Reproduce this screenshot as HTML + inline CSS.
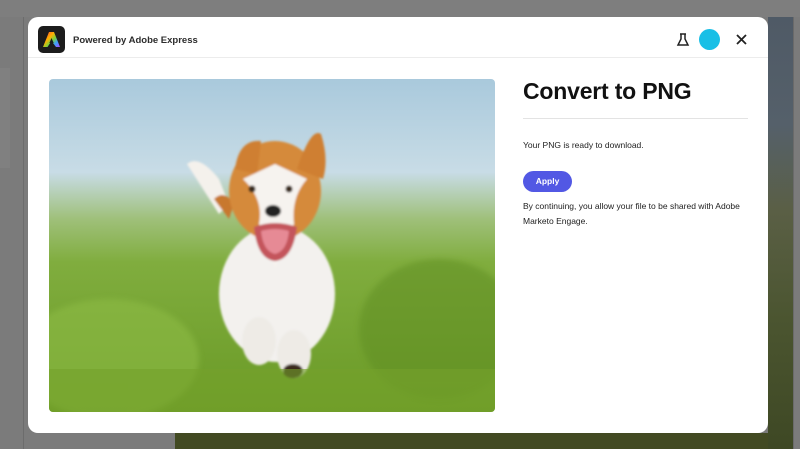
<!DOCTYPE html>
<html><head><meta charset="utf-8"><style>
*{margin:0;padding:0;box-sizing:border-box}
body{width:800px;height:449px;overflow:hidden;background:#7b7b7b;position:relative;font-family:"Liberation Sans",sans-serif}
.abs{position:absolute}
</style></head><body>
<div class="abs" style="left:0;top:0;width:800px;height:17px;background:#7e7e7e"></div>
<div class="abs" style="left:23px;top:17px;width:1px;height:432px;background:#6c6c6c"></div>
<div class="abs" style="left:0;top:68px;width:10px;height:100px;background:#808080"></div>
<div class="abs" style="left:768px;top:17px;width:25px;height:432px;background:linear-gradient(#4f5a66 0%,#55606a 25%,#5a5f45 45%,#4b5530 70%,#3e4824 100%)"></div>
<div class="abs" style="left:793px;top:17px;width:1px;height:432px;background:#6a6a6a"></div>
<div class="abs" style="left:175px;top:433px;width:593px;height:16px;background:#424a22"></div>

<div class="abs" style="left:28px;top:17px;width:740px;height:416px;background:#fff;border-radius:10px;overflow:hidden">
  <div class="abs" style="left:10px;top:9px;width:27px;height:27px;background:#1c1c1c;border-radius:5px">
    <svg width="27" height="27" viewBox="0 0 27 27"><defs><linearGradient id="g" gradientUnits="userSpaceOnUse" x1="6" y1="6" x2="22" y2="21"><stop offset="0" stop-color="#ff3d3d"/><stop offset=".35" stop-color="#ffb000"/><stop offset=".55" stop-color="#7bd23a"/><stop offset=".75" stop-color="#3aa0ff"/><stop offset="1" stop-color="#b04bff"/></linearGradient></defs><path d="M11 6h5l6 15h-4l-4.5-6-4 6H5z" fill="url(#g)"/><path d="M13.5 12l2.2 5h-4.3z" fill="#1c1c1c"/></svg>
  </div>
  <div class="abs" style="left:45px;top:18px;font-size:9.5px;font-weight:bold;color:#2c2c2c">Powered by Adobe Express</div>
  <svg class="abs" style="left:648px;top:15px" width="14" height="16" viewBox="0 0 14 16"><path d="M4 2h6M5 2v5L2 13h10L9 7V2" fill="none" stroke="#222" stroke-width="1.5"/></svg>
  <div class="abs" style="left:671px;top:12px;width:21px;height:21px;border-radius:50%;background:#18bfe6"></div>
  <svg class="abs" style="left:707px;top:16px" width="13" height="13" viewBox="0 0 13 13"><path d="M2 2l9 9M11 2l-9 9" stroke="#222" stroke-width="1.8"/></svg>
  <div class="abs" style="left:0;top:40px;width:740px;height:1px;background:#ececec"></div>

  <div class="abs" style="left:21px;top:62px;width:446px;height:333px;border-radius:4px;overflow:hidden">
    <svg width="446" height="333" viewBox="0 0 446 333">
      <defs>
        <linearGradient id="sky" x1="0" y1="0" x2="0" y2="1"><stop offset="0" stop-color="#a9c9dc"/><stop offset=".28" stop-color="#c8dce6"/><stop offset=".42" stop-color="#9fc07a"/><stop offset=".55" stop-color="#80ad3e"/><stop offset="1" stop-color="#6a9a26"/></linearGradient>
        <filter id="b"><feGaussianBlur stdDeviation="3"/></filter>
        <filter id="b1"><feGaussianBlur stdDeviation="1"/></filter>
      </defs>
      <rect width="446" height="333" fill="url(#sky)"/>
      <ellipse cx="60" cy="280" rx="90" ry="60" fill="#8dbb44" opacity=".6" filter="url(#b)"/>
      <ellipse cx="390" cy="250" rx="80" ry="70" fill="#5e8d22" opacity=".5" filter="url(#b)"/>
      <g filter="url(#b1)">
        <path d="M138 85 Q150 75 170 100 L180 125 L170 135 Z" fill="#f4f1ec"/>
        <path d="M165 120 Q175 110 185 125 L180 140Z" fill="#c8782f"/>
        <ellipse cx="228" cy="215" rx="58" ry="68" fill="#f3f1ee"/>
        <ellipse cx="210" cy="262" rx="17" ry="24" fill="#eeebe6"/>
        <ellipse cx="245" cy="275" rx="17" ry="24" fill="#eeebe6"/>
        <ellipse cx="244" cy="292" rx="10" ry="7" fill="#3a2a1e"/>
        <ellipse cx="226" cy="112" rx="46" ry="50" fill="#d58a3a"/>
        <path d="M186 90 Q190 60 212 62 L208 95Z" fill="#cf7f30"/>
        <path d="M248 90 Q262 48 272 55 Q280 80 274 100Z" fill="#cf7f30"/>
        <path d="M194 100 Q215 120 210 145 Q222 175 226 190 L245 145 Q242 118 258 100 L226 85Z" fill="#f6f3ef"/>
        <ellipse cx="224" cy="132" rx="8" ry="6" fill="#222"/>
        <path d="M205 148 Q226 140 248 148 Q244 180 226 182 Q208 180 205 148Z" fill="#c4545c"/>
        <path d="M212 152 Q226 148 240 152 Q238 172 226 175 Q214 172 212 152Z" fill="#e68a95"/>
        <circle cx="203" cy="110" r="3.5" fill="#3a2a1e"/>
        <circle cx="240" cy="110" r="3.5" fill="#3a2a1e"/>
      </g>
      <rect y="290" width="446" height="43" fill="#74a22c" opacity=".6"/>
    </svg>
  </div>

  <div class="abs" style="left:495px;top:61px;font-size:23px;font-weight:bold;color:#111;letter-spacing:-0.2px">Convert to PNG</div>
  <div class="abs" style="left:495px;top:101px;width:225px;height:1px;background:#e3e3e3"></div>
  <div class="abs" style="left:495px;top:123px;font-size:8.5px;color:#222">Your PNG is ready to download.</div>
  <div class="abs" style="left:495px;top:154px;width:49px;height:21px;border-radius:11px;background:#5258e4;color:#fff;font-size:8.5px;font-weight:bold;text-align:center;line-height:21px">Apply</div>
  <div class="abs" style="left:495px;top:182px;width:235px;font-size:8.5px;color:#222;line-height:14.5px">By continuing, you allow your file to be shared with Adobe Marketo Engage.</div>
</div>
</body></html>
